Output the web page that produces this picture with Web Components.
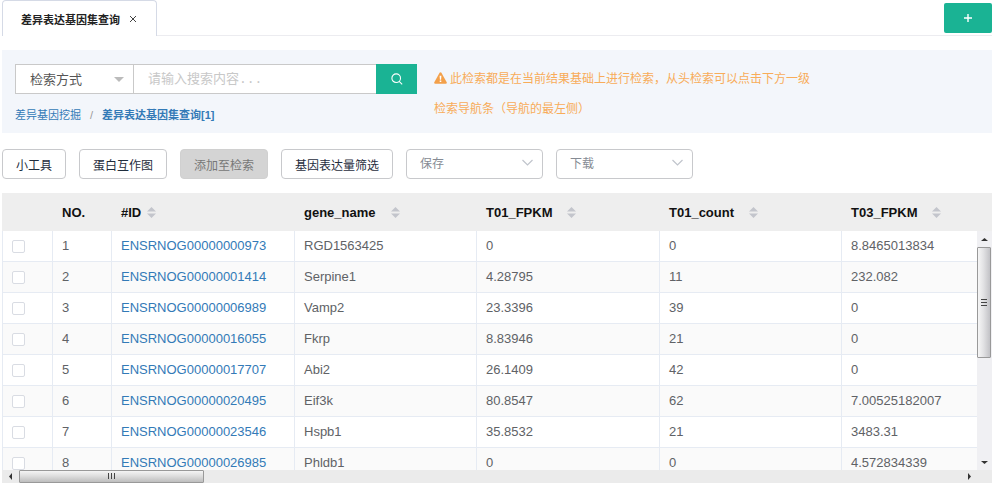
<!DOCTYPE html>
<html lang="zh-CN">
<head>
<meta charset="utf-8">
<title>差异表达基因集查询</title>
<style>
  html, body { height: 100%; }
  body {
    margin: 0;
    background: #fff;
    font-family: "Liberation Sans", "Noto Sans CJK SC", sans-serif;
    font-size: 13px;
    color: #606266;
  }
  gene-page { height: 100%; }
</style>
</head>
<body>
<gene-page>
  <tab-bar slot="tabs">差异表达基因集查询</tab-bar>
  <search-panel slot="search">
    <bread-crumbs></bread-crumbs>
    <hint-text slot="hint">此检索都是在当前结果基础上进行检索，从头检索可以点击下方一级检索导航条（导航的最左侧）</hint-text>
  </search-panel>
  <tool-bar slot="tools">
    <tool-button>小工具</tool-button>
    <tool-button>蛋白互作图</tool-button>
    <tool-button disabled>添加至检索</tool-button>
    <tool-button>基因表达量筛选</tool-button>
    <tool-select label="保存"></tool-select>
    <tool-select label="下载"></tool-select>
  </tool-bar>
  <data-grid slot="grid"></data-grid>
</gene-page>

<script>
const define = (name, html, setup) => customElements.define(name, class extends HTMLElement {
  constructor() {
    super();
    const t = document.createElement('template');
    t.innerHTML = '<style>*{box-sizing:border-box}button,input,select{font-family:inherit;margin:0}</style>' +
      (typeof html === 'function' ? html(this) : html);
    this.attachShadow({ mode: 'open' }).append(t.content.cloneNode(true));
    if (setup) setup(this, this.shadowRoot);
  }
});

define('gene-page', `
  <style>
    :host { display: flex; flex-direction: column; box-sizing: border-box; padding: 0 8px 0 2px; overflow: hidden; }
    main { flex: 1; min-height: 0; display: flex; flex-direction: column; padding-top: 14px; }
    .grid { flex: 1; min-height: 0; display: flex; padding-top: 14px; }
    .tools { padding-top: 16px; }
  </style>
  <slot name="tabs"></slot>
  <main>
    <slot name="search"></slot>
    <div class="tools"><slot name="tools"></slot></div>
    <div class="grid"><slot name="grid"></slot></div>
  </main>`);

define('tab-bar', `
  <style>
    :host { display: flex; justify-content: space-between; height: 36px; background: linear-gradient(#ececf0, #ececf0) bottom / 100% 1px no-repeat; }
    .tab { display: flex; align-items: center; gap: 8px; height: 36px; padding: 0 18px; border: 1px solid #d5dae6; border-bottom: 0; border-radius: 4px 4px 0 0; background: #fff; color: #222; font-size: 11px; font-weight: bold; }
    button { border: 0; cursor: pointer; }
    .close { display: flex; padding: 0; background: none; }
    .add { display: flex; align-items: center; justify-content: center; width: 48px; height: 30px; margin-top: 3px; border-radius: 2px; background: #1ab394; }
  </style>
  <div class="tab"><span><slot></slot></span>
    <button class="close" aria-label="关闭"><svg width="10" height="10" viewBox="0 0 10 10" stroke="#444" stroke-width="1"><path d="M2 2l6 6M8 2l-6 6"/></svg></button>
  </div>
  <button class="add" aria-label="新增"><svg width="10" height="10" viewBox="0 0 10 10" stroke="#fff" stroke-width="1.4"><path d="M5 1v8M1 5h8"/></svg></button>`);

define('search-panel', `
  <style>
    :host { display: flex; align-items: flex-start; gap: 17px; box-sizing: border-box; min-height: 83px; padding: 14px 13px 8px; background: #f3f6fb; }
    form { display: flex; height: 30px; margin-bottom: 11px; }
    .pick { position: relative; width: 119px; }
    select { width: 100%; height: 30px; padding: 0 14px; border: 1px solid #c9c9c9; border-radius: 0; background: #fff; appearance: none; color: #555; font-size: 13px; }
    .pick svg { position: absolute; right: 10px; top: 13px; pointer-events: none; }
    input { width: 242px; height: 30px; padding: 0 14px; border: 1px solid #c9c9c9; border-left: 0; border-right: 0; border-radius: 0; outline: 0; background: #fff; font-family: "Liberation Mono", "Noto Sans CJK SC", monospace; font-size: 13px; }
    input::placeholder { color: #c8c8c8; opacity: 1; }
    button { display: flex; align-items: center; justify-content: center; width: 41px; height: 30px; border: 0; background: #1ab394; cursor: pointer; }
    ::slotted(hint-text) { flex: 0 1 380px; }
  </style>
  <div>
    <form>
      <span class="pick"><select aria-label="检索方式"><option>检索方式</option></select>
        <svg width="10" height="6" viewBox="0 0 10 6"><path d="M0 0h10L5 5z" fill="#bbb"/></svg></span>
      <input type="text" aria-label="搜索内容" placeholder="请输入搜索内容...">
      <button type="button" aria-label="搜索"><svg width="12" height="12" viewBox="0 0 12 12" fill="none" stroke="#fff" stroke-width="1.1"><circle cx="5.2" cy="5.2" r="4.3"/><path d="M8.2 8.4l3 3"/></svg></button>
    </form>
    <slot></slot>
  </div>
  <slot name="hint"></slot>`);

define('bread-crumbs', `
  <style>
    :host { display: block; font-size: 11px; line-height: 20px; }
    nav { display: flex; gap: 9px; color: #999; }
    a { color: #337ab7; text-decoration: none; }
    .now { font-weight: bold; }
  </style>
  <nav aria-label="导航"><a href="#">差异基因挖掘</a><span>/</span><a class="now" href="#">差异表达基因集查询[1]</a></nav>`);

define('hint-text', `
  <style>
    :host { display: block; color: #f8ac59; font-size: 12px; line-height: 30px; }
    svg { margin-right: 3px; vertical-align: -1px; }
  </style>
  <svg width="13" height="12" viewBox="0 0 13 12"><path d="M6.5 .3c.4 0 .7.2.9.5l5.3 9.4c.4.8-.1 1.5-.9 1.5H1.200c-.8 0-1.300-.7-.9-1.500L5.600.8c.2-.3.5-.5.9-.5z" fill="#f3a04a"/><path d="M5.600 3.800h1.800l-.3 3.900H5.900zM5.700 8.500h1.600V10H5.700z" fill="#fff"/></svg><slot></slot>`);

define('tool-bar', `
  <style>:host { display: flex; gap: 13px; }</style>
  <slot></slot>`);

define('tool-button', `
  <style>
    :host { display: block; }
    button { height: 30px; padding: 0 13px; border: 1px solid #c8c9cc; border-radius: 4px; background: #fff; color: #1f2d3d; font-size: 12px; white-space: nowrap; cursor: pointer; }
    button:disabled { border-color: #d0d0d0; background: #d4d4d4; color: #777; cursor: default; }
  </style>
  <button><slot></slot></button>`,
  (el, root) => { root.querySelector('button').disabled = el.hasAttribute('disabled'); });

define('tool-select', el => `
  <style>
    :host { display: block; position: relative; width: 137px; }
    select { width: 100%; height: 30px; padding: 0 13px; border: 1px solid #c8c9cc; border-radius: 4px; background: #fff; appearance: none; color: #868b94; font-size: 12px; }
    svg { position: absolute; right: 10px; top: 10px; pointer-events: none; }
  </style>
  <select aria-label="${el.getAttribute('label')}"><option>${el.getAttribute('label')}</option></select>
  <svg width="11" height="8" viewBox="0 0 11 8" fill="none" stroke="#c0c4cc" stroke-width="1.2"><path d="M.5 1l5 5 5-5"/></svg>`);

define('sort-arrows', `
  <style>:host { display: inline-flex; }</style>
  <svg width="9" height="11" viewBox="0 0 9 11" fill="#c3c5cc"><path d="M4.500 0L9 4.600H0zM4.500 11L9 6.400H0z"/></svg>`);

define('scroll-bar', el => {
  const v = el.hasAttribute('vertical');
  return `
  <style>
    :host { display: flex; flex-direction: ${v ? 'column' : 'row'}; background: ${v ? '#f0f0f3' : '#ebebeb'}; }
    i { display: flex; align-items: center; justify-content: center; flex: 0 0 16px; }
    .track { flex: 1; min-height: 0; }
    .thumb { display: flex; align-items: center; justify-content: center; border: 1px solid #999; border-radius: 1px;
      ${v ? 'height: 111px; margin-right: 1px; background: linear-gradient(90deg, #f6f6f6, #e2e2e4 45%, #c2c2c6);'
          : 'width: 185px; height: 13px; margin-left: 1px; background: linear-gradient(#f4f4f4, #dedede 45%, #bdbdbd);'} }
    svg { display: block; }
  </style>
  <i><svg width="7" height="7" viewBox="0 0 7 7"><path d="${v ? 'M0 5h7L3.500 2z' : 'M5 0v7L2 3.500z'}" fill="#333"/></svg></i>
  <div class="track"><div class="thumb"><svg width="7" height="7" viewBox="0 0 7 7" stroke="#444"><path d="${v ? 'M0 .5h6M0 3.500h6M0 6.500h6' : 'M.5 0v6M3.500 0v6M6.500 0v6'}"/></svg></div></div>
  <i><svg width="7" height="7" viewBox="0 0 7 7"><path d="${v ? 'M0 2h7L3.500 5z' : 'M2 0v7L5 3.500z'}" fill="#333"/></svg></i>`;
});

const columns = ['gene_name', 'T01_FPKM', 'T01_count', 'T03_FPKM'];
const records = [
  ['ENSRNOG00000000973', 'RGD1563425', '0', '0', '8.8465013834'],
  ['ENSRNOG00000001414', 'Serpine1', '4.28795', '11', '232.082'],
  ['ENSRNOG00000006989', 'Vamp2', '23.3396', '39', '0'],
  ['ENSRNOG00000016055', 'Fkrp', '8.83946', '21', '0'],
  ['ENSRNOG00000017707', 'Abi2', '26.1409', '42', '0'],
  ['ENSRNOG00000020495', 'Eif3k', '80.8547', '62', '7.00525182007'],
  ['ENSRNOG00000023546', 'Hspb1', '35.8532', '21', '3483.31'],
  ['ENSRNOG00000026985', 'Phldb1', '0', '0', '4.572834339']
];

define('data-grid', `
  <style>
    :host { display: flex; flex-direction: column; flex: 1; min-width: 0; min-height: 0; }
    .body { display: flex; flex: 1; min-height: 0; }
    .view { flex: 1; min-width: 0; overflow: hidden; }
    .side { display: flex; flex-direction: column; width: 15px; }
    .side::before { content: ""; flex: 0 0 38px; background: #eee; }
    .side scroll-bar { flex: 1; min-height: 0; }
    .foot { display: flex; height: 13px; }
    .foot scroll-bar { flex: 1; }
    .foot::after { content: ""; width: 15px; background: #ebebeb; }
    table { width: 100%; table-layout: fixed; border-collapse: separate; border-spacing: 0; }
    .c-check { width: 51px; } .c-no { width: 59px; } .c-wide { width: 183px; } .c-mid { width: 182px; }
    th { height: 38px; padding: 0 9px; background: #eee; color: #111; font-size: 13px; text-align: left; white-space: nowrap; }
    th sort-arrows { margin-left: 15px; vertical-align: -1px; }
    th.id sort-arrows { margin-left: 6px; }
    td { height: 31px; padding: 0 9px; border-right: 1px solid #e6ebf3; border-bottom: 1px solid #e6ebf3; font-size: 13px; line-height: 20px; white-space: nowrap; }
    td:first-child { border-left: 1px solid #e6ebf3; }
    td:last-child { border-right: 0; }
    tbody tr:nth-child(even) td { background: #fafafa; }
    a { color: #337ab7; text-decoration: none; }
    input { display: block; width: 13px; height: 13px; border: 1px solid #d9dce3; border-radius: 2px; background: #fff; appearance: none; }
  </style>
  <div class="body">
    <div class="view">
      <table>
        <colgroup><col class="c-check"><col class="c-no"><col class="c-wide"><col class="c-mid"><col class="c-wide"><col class="c-mid"><col></colgroup>
        <thead><tr><th></th><th>NO.</th><th class="id">#ID<sort-arrows></sort-arrows></th>${columns.map(c => `<th>${c}<sort-arrows></sort-arrows></th>`).join('')}</tr></thead>
        <tbody>${records.map(([id, ...cells], i) => `<tr><td><input type="checkbox" aria-label="${id}"></td><td>${i + 1}</td><td><a href="#">${id}</a></td>${cells.map(c => `<td>${c}</td>`).join('')}</tr>`).join('')}</tbody>
      </table>
    </div>
    <div class="side"><scroll-bar vertical></scroll-bar></div>
  </div>
  <div class="foot"><scroll-bar></scroll-bar></div>`);
</script>
</body>
</html>
